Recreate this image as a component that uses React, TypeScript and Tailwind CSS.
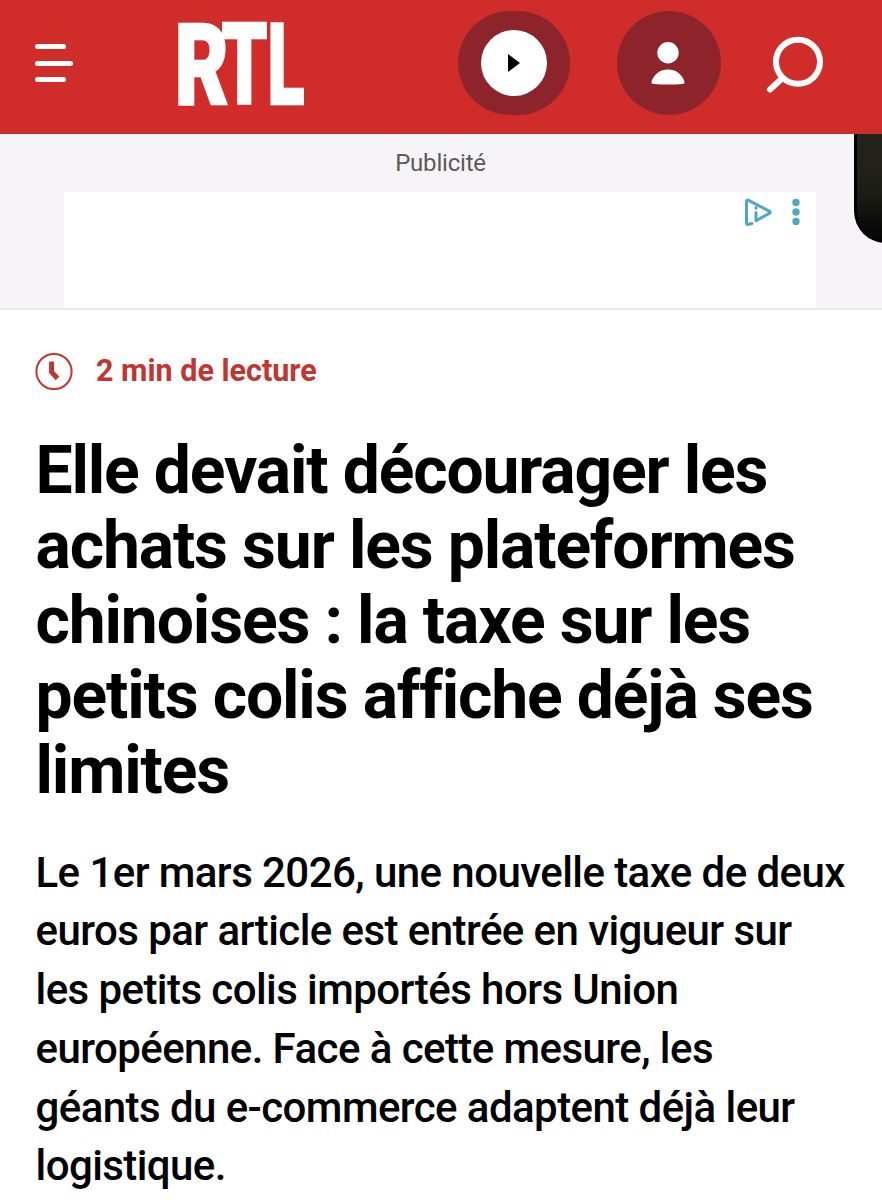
const titleLines = [
  'Elle devait décourager les',
  'achats sur les plateformes',
  'chinoises : la taxe sur les',
  'petits colis affiche déjà ses',
  'limites',
]

const leadLines = [
  'Le 1er mars 2026, une nouvelle taxe de deux',
  'euros par article est entrée en vigueur sur',
  'les petits colis importés hors Union',
  'européenne. Face à cette mesure, les',
  'géants du e-commerce adaptent déjà leur',
  'logistique.',
]

function Header() {
  return (
    <header className="flex h-[134px] items-start border-b border-[#b03a35] bg-[#d02d2a] text-white">
      <button aria-label="Menu" className="mt-[44px] ml-[35px] flex w-[38px] flex-col gap-[11.5px]">
        <span className="h-[5px] w-[31px] rounded-full bg-white" />
        <span className="h-[5px] w-[38px] rounded-full bg-white" />
        <span className="h-[5px] w-[31px] rounded-full bg-white" />
      </button>

      <a className="mt-[20px] ml-[103px] block">
        <svg width="132" height="90" viewBox="0 0 132 90" fill="white" stroke="white" strokeWidth="2.4" fontSize="113" className="overflow-visible font-[Roboto] font-black">
          <text y="84.3">
            <tspan x="-1.3" textLength="54" lengthAdjust="spacingAndGlyphs">R</tspan>
            <tspan x="45.5" textLength="46" lengthAdjust="spacingAndGlyphs">T</tspan>
            <tspan x="91.5" textLength="37" lengthAdjust="spacingAndGlyphs">L</tspan>
          </text>
        </svg>
      </a>

      <button aria-label="Écouter" className="mt-[11px] ml-[150px] flex h-[104px] w-[112px] items-center justify-center rounded-[52px] bg-[#8e242b]">
        <span className="flex size-[66px] items-center justify-center rounded-full bg-white">
          <svg width="12" height="18" viewBox="0 0 12 18" fill="black">
            <path d="M0 0L12 9L0 18Z" />
          </svg>
        </span>
      </button>

      <button aria-label="Compte" className="mt-[11px] ml-[46.5px] flex size-[104px] items-center justify-center rounded-full bg-[#8e242b]">
        <svg width="34" height="43" viewBox="0 0 34 43" fill="white" className="-ml-[2px]">
          <circle cx="17" cy="10.7" r="10.7" />
          <path d="M3 42C0.8 42 0.1 41 0.6 39.2C3.2 32 9 27.4 17 27.4S30.8 32 33.4 39.2C33.9 41 33.2 42 31 42Q17 43 3 42Z" />
        </svg>
      </button>

      <button aria-label="Rechercher" className="mt-[37px] ml-[45.5px]">
        <svg width="58" height="57" viewBox="0 0 58 57" fill="none" stroke="white" strokeLinecap="round" className="overflow-visible">
          <circle cx="32" cy="24.8" r="22" strokeWidth="6" />
          <path d="M16.5 41L4 52.5" strokeWidth="6" />
        </svg>
      </button>
    </header>
  )
}

function AdSlot() {
  return (
    <section className="relative flex h-[176px] flex-col items-center overflow-hidden border-b-2 border-[#e9e8e9] bg-[#f6f4f6]">
      <p className="mt-[15px] mr-px h-[43px] text-[24px] leading-[28px] tracking-[-0.2px] text-[#5c5a5c]">Publicité</p>
      <div className="mr-[2px] flex w-[752px] flex-1 items-start justify-end bg-white pt-[6px] pr-[16px]">
        <svg width="28" height="29" viewBox="0 0 28 29" fill="none" stroke="#4fa8c0" strokeWidth="3" strokeLinejoin="round" strokeLinecap="round">
          <path d="M8 25.5L4 26.5Q2.5 26.5 2.5 25V3.5Q2.5 1.5 4.5 2.3L25.5 13.3Q27 14.3 25.5 15.2L12 22.8V14.5" />
          <circle cx="12" cy="10" r="1.7" fill="#4fa8c0" stroke="none" />
        </svg>
        <svg width="8" height="28" viewBox="0 0 8 28" fill="#4fa8c0" className="ml-[20px]">
          <circle cx="4" cy="4.5" r="3.7" />
          <circle cx="4" cy="14" r="3.7" />
          <circle cx="4" cy="23.4" r="3.7" />
        </svg>
      </div>

      {/* Floating video player, half out of the viewport */}
      <div className="absolute top-0 left-[854px] h-[109px] w-[80px] rounded-bl-[32px] border-b-2 border-l-[3px] border-black bg-linear-to-b from-[#26221c] via-[#1f1f1a] to-[#050505]" />
    </section>
  )
}

export default function App() {
  return (
    <div className="h-[1200px] w-[882px] overflow-hidden bg-white font-[Roboto,sans-serif] text-black">
      <Header />
      <AdSlot />

      <main className="pl-[35.5px]">
        <div className="mt-[42px] flex h-[38px] items-center text-[#c23632]">
          <svg width="38" height="38" viewBox="0 0 38 38" fill="none" stroke="currentColor" className="-ml-px">
            <circle cx="19" cy="19.5" r="17.6" strokeWidth="2" />
            <path d="M16.6 9.5V20L22.5 26.5" strokeWidth="5" />
          </svg>
          <p className="ml-[23.5px] text-[30.5px] leading-[36px] font-bold whitespace-nowrap">2 min de lecture</p>
        </div>

        <h1 className="mt-[43px] text-[66px] leading-[75px] font-bold tracking-[-1.15px] whitespace-nowrap">
          {titleLines.map(line => (
            <span key={line} className="block">{line}</span>
          ))}
        </h1>

        <p className="mt-[35.7px] text-[42px] leading-[58.7px] font-medium tracking-[-0.57px] whitespace-nowrap">
          {leadLines.map(line => (
            <span key={line} className="block">{line}</span>
          ))}
        </p>
      </main>
    </div>
  )
}
